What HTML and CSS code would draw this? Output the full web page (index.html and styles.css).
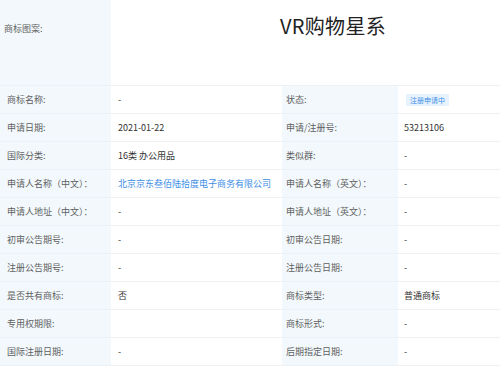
FILE: index.html
```html
<!DOCTYPE html>
<html lang="zh-CN">
<head>
<meta charset="utf-8">
<link rel="stylesheet" href="styles.css">
</head>
<body>
<div class="grid">
  <div class="lab img-lab">商标图案:</div>
  <div class="val img-val"><span class="logo">VR购物星系</span></div>

  <div class="lab">商标名称:</div><div class="val">-</div>
  <div class="lab">状态:</div><div class="val"><span class="badge">注册申请中</span></div>

  <div class="lab">申请日期:</div><div class="val">2021-01-22</div>
  <div class="lab">申请/注册号:</div><div class="val">53213106</div>

  <div class="lab">国际分类:</div><div class="val">16类 办公用品</div>
  <div class="lab">类似群:</div><div class="val">-</div>

  <div class="lab">申请人名称（中文）：</div><div class="val link">北京京东叁佰陆拾度电子商务有限公司</div>
  <div class="lab">申请人名称（英文）：</div><div class="val">-</div>

  <div class="lab">申请人地址（中文）：</div><div class="val">-</div>
  <div class="lab">申请人地址（英文）：</div><div class="val">-</div>

  <div class="lab">初审公告期号:</div><div class="val">-</div>
  <div class="lab">初审公告日期:</div><div class="val">-</div>

  <div class="lab">注册公告期号:</div><div class="val">-</div>
  <div class="lab">注册公告日期:</div><div class="val">-</div>

  <div class="lab">是否共有商标:</div><div class="val">否</div>
  <div class="lab">商标类型:</div><div class="val">普通商标</div>

  <div class="lab">专用权期限:</div><div class="val"></div>
  <div class="lab">商标形式:</div><div class="val">-</div>

  <div class="lab">国际注册日期:</div><div class="val">-</div>
  <div class="lab">后期指定日期:</div><div class="val">-</div>
</div>
</body>
</html>
```
FILE: styles.css
```css
html, body {
  margin: 0;
  padding: 0;
  background: #ffffff;
}
body {
  font-family: "Noto Sans CJK SC", "Noto Sans", sans-serif;
  font-size: 9px;
  color: #333;
}
.grid {
  display: grid;
  grid-template-columns: 111px 171px 116px 1fr;
  grid-template-rows: 86px;
  grid-auto-rows: 28px;
  width: 500px;
}
.lab, .val {
  display: flex;
  align-items: center;
  border-bottom: 1px solid #eef1f4;
  box-sizing: border-box;
  white-space: nowrap;
}
.lab {
  background: #f2f8fc;
  color: #5f5f5f;
  padding-left: 4px;
  border-bottom-color: #eaf2f8;
}
.val {
  padding-left: 6px;
  color: #333;
}
.grid > .lab:nth-child(4n+3) {
  padding-left: 7px;
}
.grid > .val:nth-child(4n+4) {
  padding-left: 7px;
}
.img-lab {
  align-items: flex-start;
  padding-top: 22px;
}
.img-val {
  grid-column: span 3;
  align-items: flex-start;
  padding-left: 169px;
  padding-top: 12px;
}
.logo {
  font-size: 20px;
  color: #222;
  line-height: 28px;
  letter-spacing: 0.3px;
}
.link {
  color: #3d8ee6;
}
.badge {
  background: #e6f2fd;
  color: #3d8ee6;
  font-size: 7px;
  padding: 2px 4px;
  margin-left: 2px;
  line-height: 8px;
  border-radius: 1px;
}
```
